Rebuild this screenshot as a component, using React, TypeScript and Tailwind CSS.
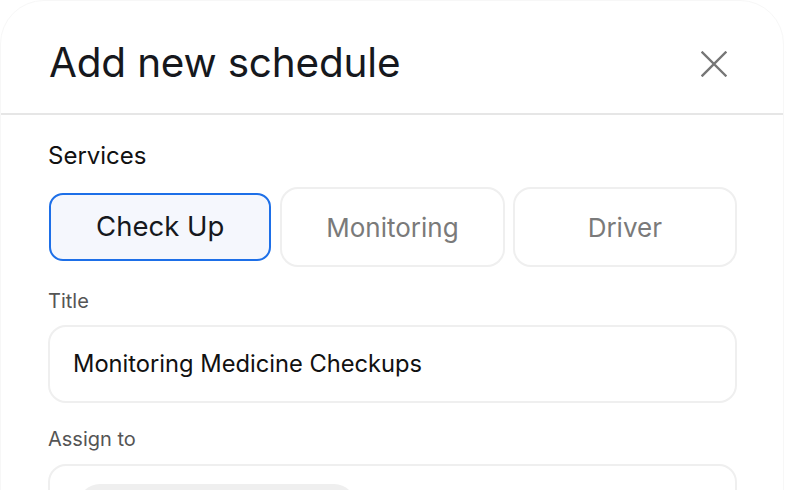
import React from "react";

export default function App() {
  return (
    <div className="w-[786px] h-[490px] overflow-hidden bg-white" style={{ fontFamily: "Inter, 'Noto Sans', sans-serif" }}>
      <div className="w-[784px] h-[560px] rounded-t-[44px] border border-[#f7f7f7] bg-white">
        <div className="h-[114px] flex items-center justify-between pl-[48px] pr-[56px] border-b-2 border-[#e6e6e6]">
          <h1 className="text-[40.5px] leading-none text-[#16181d] tracking-[-0.2px] mt-[12px]">Add new schedule</h1>
          <svg width="26" height="26" viewBox="0 0 26 26" className="mt-[14px]">
            <path d="M1.5 1.5 L24.5 24.5 M24.5 1.5 L1.5 24.5" stroke="#767676" strokeWidth="2.4" strokeLinecap="square" />
          </svg>
        </div>
        <div className="pl-[47px] pr-[46px] pt-[27px]">
          <div className="text-[24px] leading-[28px] text-[#111]">Services</div>
          <div className="mt-[17px] grid grid-cols-3 gap-[8px] h-[80px] items-center">
            <button className="mx-[1px] h-[68px] rounded-[14px] border-2 border-[#1d6fe8] bg-[#f5f7fd] text-[27.5px] text-[#16181d]">Check Up</button>
            <button className="h-[80px] rounded-[18px] border-2 border-[#efefef] bg-white text-[26px] text-[#7a7a7a]">Monitoring</button>
            <button className="h-[80px] rounded-[18px] border-2 border-[#efefef] bg-white text-[26px] text-[#7a7a7a]">Driver</button>
          </div>
          <div className="mt-[22px] text-[20px] leading-[24px] text-[#555]">Title</div>
          <div className="mt-[12px] h-[78px] rounded-[18px] border-2 border-[#efefef] flex items-center pl-[23px] text-[23.7px] text-[#111]">Monitoring Medicine Checkups</div>
          <div className="mt-[24px] text-[20px] leading-[24px] text-[#555]">Assign to</div>
          <div className="mt-[13px] h-[78px] rounded-[18px] border-2 border-[#efefef] pl-[28px] pt-[18px]">
            <div className="w-[278px] h-[44px] rounded-full bg-[#efefef] flex items-center pl-[8px]">
              <div className="w-[32px] h-[32px] rounded-full bg-[#d6d6d6]" />
            </div>
          </div>
        </div>
      </div>
    </div>
  );
}
